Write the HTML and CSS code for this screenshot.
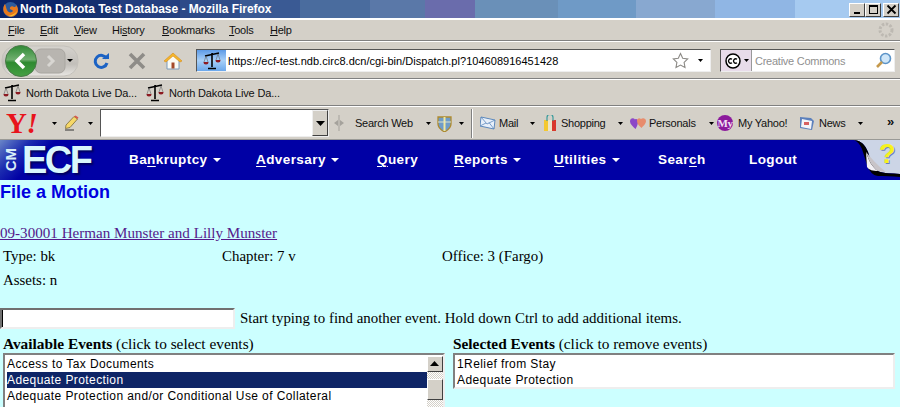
FILE: index.html
```html
<!DOCTYPE html>
<html lang="en">
<head>
<meta charset="utf-8">
<title>North Dakota Test Database - Mozilla Firefox</title>
<link rel="stylesheet" href="styles.css">
</head>
<body>
<svg class="defs" width="0" height="0" aria-hidden="true">
  <symbol id="scales" viewBox="0 0 18 18">
    <path d="M9 1v14M5 16.500h8M2 4l7-1.500L16 1" fill="none" stroke="#000" stroke-width="1.600"/>
    <path d="M3 4 1 10M3 4l2 6M15 2l-2 6M15 2l2 6" fill="none" stroke="#666" stroke-width=".6"/>
    <path d="M.5 10h5a2.500 2.500 0 0 1-5 0zM12.500 8h5a2.500 2.500 0 0 1-5 0z" fill="#8c1a22"/>
  </symbol>
  <symbol id="drop" viewBox="0 0 5 3"><path d="M0 0h5L2.500 3z" fill="#000"/></symbol>
</svg>

<header class="titlebar">
  <svg class="fox" width="17" height="17" viewBox="0 0 17 17"><circle cx="8.500" cy="8.500" r="7.500" fill="#2c5a9c"/><path d="M3 3c-3 4-2 10 3 12 5 2 10-1 10-6 0-2-1-4-2-5 0 2-1 2-2 2C10 4 7 6 8 8c1 1 3 1 3 2-1 2-5 2-6-1C4 7 4 5 3 3z" fill="#e8781c"/><path d="M6 15c4 1 8-1 9-5-2 3-5 4-9 5z" fill="#f6c23c"/></svg>
  <span class="title-text">North Dakota Test Database - Mozilla Firefox</span>
  <div class="winbtns">
    <span class="winbtn"><svg width="15" height="13"><path d="M4 9h6v2H4z"/></svg></span>
    <span class="winbtn"><svg width="15" height="13"><path d="M3 2h9v9H3zM4 4v6h7V4z" fill-rule="evenodd"/></svg></span>
    <span class="winbtn close"><svg width="15" height="13"><path d="m3.500 2.500 8 8m0-8-8 8" stroke="#000" stroke-width="1.800"/></svg></span>
  </div>
</header>

<nav class="menubar">
  <span class="m m-file"><u>F</u>ile</span>
  <span class="m m-edit"><u>E</u>dit</span>
  <span class="m m-view"><u>V</u>iew</span>
  <span class="m m-hist">Hi<u>s</u>tory</span>
  <span class="m m-book"><u>B</u>ookmarks</span>
  <span class="m m-tools"><u>T</u>ools</span>
  <span class="m m-help"><u>H</u>elp</span>
  <svg class="throbber" width="16" height="16" viewBox="0 0 16 16"><circle cx="8" cy="8" r="6" fill="none" stroke="#bdb9b2" stroke-width="3" stroke-dasharray="2.400 1.500"/></svg>
</nav>

<div class="navbar">
  <div class="backfwd">
    <svg width="78" height="34" viewBox="0 0 78 34">
      <defs><linearGradient id="pill" x1="0" y1="0" x2="0" y2="1"><stop offset="0" stop-color="#d6d3ce"/><stop offset=".6" stop-color="#c2bfba"/><stop offset="1" stop-color="#e8e6e2"/></linearGradient>
      <linearGradient id="green" x1="0" y1="0" x2="0" y2="1"><stop offset="0" stop-color="#2e8a34"/><stop offset=".45" stop-color="#6fae6e"/><stop offset=".55" stop-color="#2e8a30"/><stop offset="1" stop-color="#46a044"/></linearGradient></defs>
      <rect x="1" y="2" width="76" height="30" rx="14" fill="url(#pill)" stroke="#c4c1bb"/>
      <rect x="34" y="5" width="30" height="24" rx="6" fill="#b8b5b0" stroke="#a9a6a1"/>
      <circle cx="20" cy="17" r="15.500" fill="url(#green)" stroke="#4a7a48"/>
      <path d="m23 10-7 7 7 7" fill="none" stroke="#fff" stroke-width="3.500"/>
      <path d="m47 12 5 5-5 5" fill="none" stroke="#d8d6d2" stroke-width="3"/>
      <path d="M66 15h6l-3 3z"/>
    </svg>
  </div>
  <svg class="reload" width="18" height="18" viewBox="0 0 18 18"><path d="M14.500 6.500A6 6 0 1 0 15 11" fill="none" stroke="#1b62c4" stroke-width="3"/><path d="M10 7h7V1z" fill="#1b62c4"/></svg>
  <svg class="stop" width="18" height="18" viewBox="0 0 18 18"><path d="m2 2 14 14M16 2 2 16" stroke="#8e8c88" stroke-width="3.600"/></svg>
  <svg class="home" width="20" height="18" viewBox="0 0 20 18"><path d="M4 8v9h12V8L10 3z" fill="#fbfbf4" stroke="#7c9cbc"/><path d="M1 9l9-8 9 8-2 1-7-6-7 6z" fill="#f4b62c" stroke="#d68a18" stroke-width=".6"/><path d="M8.500 10.500h3v6h-3z" fill="#a44a2a"/></svg>
  <div class="urlbar">
    <span class="site"><svg width="18" height="18"><use href="#scales"/></svg></span>
    <span class="url">https://ecf-test.ndb.circ8.dcn/cgi-bin/Dispatch.pl?104608916451428</span>
    <svg class="star" width="17" height="17" viewBox="0 0 17 17"><path d="m8.500 1.500 2.200 4.700 5 .7-3.600 3.500.9 5-4.500-2.400-4.500 2.400.9-5L1.300 6.900l5-.7z" fill="#fff" stroke="#8c8a86" stroke-width="1.100"/></svg>
    <svg class="urldrop" width="5" height="3"><use href="#drop"/></svg>
  </div>
  <div class="searchbar">
    <span class="engine"><svg width="16" height="16" viewBox="0 0 16 16"><circle cx="8" cy="8" r="7" fill="#fff" stroke="#000" stroke-width="1.500"/><path d="M7 6.200a2.200 2.200 0 1 0 0 3.600M12 6.200a2.200 2.200 0 1 0 0 3.600" fill="none" stroke="#000" stroke-width="1.300"/></svg><svg width="5" height="3"><use href="#drop"/></svg></span>
    <span class="placeholder">Creative Commons</span>
    <svg class="glass" width="17" height="17" viewBox="0 0 17 17"><circle cx="10.500" cy="6.500" r="5" fill="#cfe6f8" stroke="#5c94c8" stroke-width="1.600"/><path d="m7 10-5 5" stroke="#c69a4c" stroke-width="2.600"/></svg>
  </div>
</div>

<div class="bookmarks">
  <span class="bm"><svg width="18" height="18"><use href="#scales"/></svg>North Dakota Live Da...</span>
  <span class="bm"><svg width="18" height="18"><use href="#scales"/></svg>North Dakota Live Da...</span>
</div>

<div class="yahoobar">
  <span class="yahoo-logo">Y<i>!</i></span>
  <svg class="d d1" width="5" height="3"><use href="#drop"/></svg>
  <svg class="pencil" width="15" height="16" viewBox="0 0 15 16"><path d="M2 10 10 1.500 13.500 4 6 12.500 1.500 13.500z" fill="#f6d868" stroke="#7a6a3a" stroke-width=".8"/><path d="m10 1.500 3.500 2.500 1-1.500L11.500.5z" fill="#d8584c"/><path d="M1 15h9" stroke="#333"/></svg>
  <svg class="d d2" width="5" height="3"><use href="#drop"/></svg>
  <div class="ysearch"><span class="yarrow"><svg width="9" height="5"><path d="M0 0h9L4.500 5z"/></svg></span></div>
  <svg class="grip" width="10" height="16" viewBox="0 0 10 16"><path d="M5 0v16" stroke="#a5a29c"/><path d="M4 5 0 8l4 3zM6 5l4 3-4 3z" fill="#a5a29c"/></svg>
  <span class="yt y-search">Search Web</span>
  <svg class="d d3" width="5" height="3"><use href="#drop"/></svg>
  <svg class="shield" width="15" height="17" viewBox="0 0 15 17"><path d="M1 2h13v7c0 4-3 6-6.500 8C4 15 1 13 1 9z" fill="#6f9cc8" stroke="#b08a2c" stroke-width="1.300"/><path d="M7.500 2v14" stroke="#f0e8a0" stroke-width="2"/><path d="M1 7h13" stroke="#e0e4c8"/></svg>
  <svg class="d d4" width="5" height="3"><use href="#drop"/></svg>
  <span class="ysep"></span>
  <svg class="mail" width="16" height="14" viewBox="0 0 16 14"><path d="M1 1 15 4 14 13 0 10z" fill="#e8f0fa" stroke="#5c88bc"/><path d="M1 1 7 8l8-4M0 10l6-3M14 13 9 6.500" fill="none" stroke="#5c88bc" stroke-width=".8"/></svg>
  <span class="yt y-mail">Mail</span>
  <svg class="d d5" width="5" height="3"><use href="#drop"/></svg>
  <svg class="shop" width="14" height="17" viewBox="0 0 14 17"><path d="M1 5h8v11H1z" fill="#f4c830"/><path d="M5 5h4v11H5z" fill="#ece4c8"/><path d="M9 5h4v11H9z" fill="#d8382c"/><path d="M4 6V2.500a2.500 2.500 0 0 1 6 0V6" fill="none" stroke="#3c9c9c" stroke-width="1.200"/></svg>
  <span class="yt y-shop">Shopping</span>
  <svg class="d d6" width="5" height="3"><use href="#drop"/></svg>
  <svg class="hearts" width="16" height="13" viewBox="0 0 16 13"><path d="M5 2.500C3.500.5 0 1 0 4.500 0 7 3 9.500 5.500 12 6.500 10 8 8 8 4.500 8 2 6 1.500 5 2.500z" fill="#8c48c8"/><path d="M11 2C9.500.5 7 1 7 4c0 3 2.500 5 4.500 7C13 9 16 7 16 4c0-3-3.500-3.500-5-2z" fill="#e88c6c"/></svg>
  <span class="yt y-pers">Personals</span>
  <svg class="d d7" width="5" height="3"><use href="#drop"/></svg>
  <span class="myicon">My</span>
  <span class="yt y-my">My Yahoo!</span>
  <svg class="news" width="16" height="15" viewBox="0 0 16 15"><path d="M1 1l11 1 3 3-2 9-12-2z" fill="#5c80bc"/><path d="M3 3l10 2-1 8-10-2z" fill="#f4f4f8"/><path d="M5 6h5v3H5z" fill="#d86060"/></svg>
  <span class="yt y-news">News</span>
  <svg class="d d8" width="5" height="3"><use href="#drop"/></svg>
  <span class="chev">»</span>
</div>

<div class="ecfbar">
  <div class="logo"><span class="cm">CM</span><span class="ecf">ECF</span></div>
  <a class="navitem w-bank">Ba<u>n</u>kruptcy <i class="caret"></i></a>
  <a class="navitem w-adv"><u>A</u>dversary <i class="caret"></i></a>
  <a class="navitem w-query"><u>Q</u>uery</a>
  <a class="navitem w-rep"><u>R</u>eports <i class="caret"></i></a>
  <a class="navitem w-util"><u>U</u>tilities <i class="caret"></i></a>
  <a class="navitem w-search">Sear<u>c</u>h</a>
  <a class="navitem w-logout">Logout</a>
  <svg class="help" width="52" height="41" viewBox="0 0 52 41"><path d="M0 0h6c8 1 11 5 14 12 3 10 5 15 10 19 6 3 14 2 22 3V0z" fill="#ccd5e6"/><path d="M6 0c8 1 11 5 14 12 3 10 5 15 10 19 6 3 14 2 22 3v3c-8-1-16-1-22-1-6-1-7-4-10-8L14 9C12 4 9 1 6 0z" fill="#000"/><path d="M18 12c3 9 6 15 12 19-5 0-9-1-11-4z" fill="#f2f0f4"/><path d="M18 12c5 6 12 14 20 20l-8-1c-6-4-9-10-12-19z" fill="#c8c4c8"/><text x="32" y="24" class="qshadow">?</text><text x="31" y="23" class="qmark">?</text></svg>
</div>

<main class="content">
  <h1>File a Motion</h1>
  <p class="case"><a href="#">09-30001 Herman Munster and Lilly Munster</a></p>
  <div class="facts">
    <span>Type: bk</span><span>Chapter: 7 v</span><span>Office: 3 (Fargo)</span>
  </div>
  <p class="assets">Assets: n</p>
  <div class="find">
    <input class="findinput" type="text" aria-label="Find event">
    <span>Start typing to find another event. Hold down Ctrl to add additional items.</span>
  </div>
  <div class="pickers">
    <section class="avail">
      <div class="plabel"><b>Available Events</b> (click to select events)</div>
      <div class="listbox avail-list">
        <div class="options">
          <div class="opt">Access to Tax Documents</div>
          <div class="opt sel">Adequate Protection</div>
          <div class="opt">Adequate Protection and/or Conditional Use of Collateral</div>
          <div class="opt">Administrative Expenses</div>
        </div>
        <div class="scroll"><span class="sbtn"><svg width="9" height="5"><path d="M4.500 0 9 5H0z"/></svg></span><span class="sthumb"></span></div>
      </div>
    </section>
    <section class="chosen">
      <div class="plabel"><b>Selected Events</b> (click to remove events)</div>
      <div class="listbox chosen-list">
        <div class="opt">1Relief from Stay</div>
        <div class="opt">Adequate Protection</div>
      </div>
    </section>
  </div>
</main>
</body>
</html>
```
FILE: styles.css
```css
* { box-sizing: border-box; }
html, body { margin: 0; padding: 0; height: 407px; overflow: hidden; }
body { background: #ccffff; font-family: "Liberation Serif", serif; color: #000; width: 900px; }
.defs { position: absolute; }
svg { display: block; flex: none; }

.titlebar {
  height: 18px; display: flex; align-items: center;
  background: linear-gradient(90deg, #0a246a 0 60px, #14306f 60px 120px, #243f80 120px 180px, #2d4a88 180px 240px, #3a5a94 240px 300px, #4a6c9e 300px 370px, #5a78a8 370px 425px, #6a6cac 425px 475px, #6a90b8 475px 558px, #6f9ac6 558px 636px, #88a8d0 636px 715px, #90b6e4 715px 795px, #a6caf0 795px);
  color: #fff; font: bold 12px "Liberation Sans", sans-serif; padding-left: 2px;
}
.fox { margin-right: 1px; }
.title-text { letter-spacing: -.04px; white-space: nowrap; }
.winbtns { margin-left: auto; margin-right: 1px; display: flex; }
.winbtn { width: 16px; height: 14px; background: #d4d0c8; border: 1px solid; border-color: #fff #404040 #404040 #fff; display: flex; align-items: center; justify-content: center; margin-top: 1px; }
.winbtn.close { margin-left: 2px; }

.menubar {
  height: 23px; background: #d4d0c8; border-top: 2px solid #fff; border-bottom: 1px solid #808080;
  display: flex; align-items: center; font: 11px "Liberation Sans", sans-serif; letter-spacing: -.25px; color: #111;
  padding-bottom: 1px;
}
.menubar u { text-decoration-thickness: 1px; text-underline-offset: 1px; }
.m { display: block; white-space: nowrap; }
.m-file { margin-left: 8px; width: 32px; }
.m-edit { width: 34px; }
.m-view { width: 38px; }
.m-hist { width: 50px; }
.m-book { width: 67px; }
.m-tools { width: 41px; }
.throbber { margin-left: auto; margin-right: 6px; }

.navbar {
  height: 38px; background: #d4d0c8; border-top: 1px solid #fff; border-bottom: 1px solid #808080;
  display: flex; align-items: center; padding-left: 1px; padding-top: 1px;
}
.reload { margin-left: 13px; }
.stop { margin-left: 18px; }
.home { margin-left: 17px; }
.urlbar { margin-left: 13px; width: 515px; height: 23px; display: flex; align-items: center; background: #fff; border: 1px solid; border-color: #555 #eee #eee #555; }
.site { width: 29px; height: 21px; background: linear-gradient(#5e9be6, #a8d0f8 50%, #6ca8ec); display: flex; align-items: center; justify-content: center; margin-right: 2px; }
.url { font: 11px "Liberation Sans", sans-serif; letter-spacing: .03px; white-space: nowrap; color: #000; flex: 1; }
.star { margin-right: 9px; }
.urldrop { margin-right: 7px; }
.searchbar { margin-left: 9px; width: 175px; height: 23px; display: flex; align-items: center; background: #fff; border: 1px solid; border-color: #555 #eee #eee #555; }
.engine { width: 31px; height: 21px; background: #e8dcea; border-right: 1px solid #999; display: flex; align-items: center; gap: 3px; padding-left: 4px; }
.placeholder { margin-left: 3px; font: 11px "Liberation Sans", sans-serif; letter-spacing: -.25px; color: #8f8f8f; flex: 1; white-space: nowrap; }
.glass { margin-right: 2px; }

.bookmarks {
  height: 27px; background: #d4d0c8; border-top: 1px solid #fff; border-bottom: 1px solid #808080;
  display: flex; align-items: center; font: 11px "Liberation Sans", sans-serif; letter-spacing: -.15px; color: #111; padding-left: 3px;
}
.bm { display: flex; align-items: center; gap: 5px; width: 143px; white-space: nowrap; }

.yahoobar {
  height: 33px; background: #d4d0c8; border-top: 1px solid #fff;
  display: flex; align-items: center; font: 11px "Liberation Sans", sans-serif; letter-spacing: -.25px; color: #111;
}
.yt { white-space: nowrap; }
.yahoo-logo { margin-left: 6px; width: 33px; font: bold 29px/1 "Liberation Serif", serif; color: #e8141c; letter-spacing: -.5px; }
.d { margin-top: 1px; }
.d1 { margin-left: 13px; }
.pencil { margin-left: 7px; }
.d2 { margin-left: 9px; }
.ysearch { margin-left: 7px; width: 229px; height: 28px; background: #fff; border: 1px solid; border-color: #555 #eee #eee #555; display: flex; justify-content: flex-end; }
.yarrow { width: 16px; background: #d4d0c8; border: 1px solid; border-color: #eee #404040 #404040 #eee; display: flex; align-items: center; justify-content: center; }
.grip { margin-left: 5px; }
.y-search { margin-left: 11px; width: 63px; }
.d3 { margin-left: 8px; }
.shield { margin-left: 6px; }
.d4 { margin-left: 7px; }
.ysep { margin-left: 7px; width: 2px; height: 29px; background: linear-gradient(90deg, #808080 50%, #fff 50%); }
.mail { margin-left: 7px; }
.y-mail { margin-left: 3px; width: 21px; }
.d5 { margin-left: 10px; }
.shop { margin-left: 8px; }
.y-shop { margin-left: 4px; width: 47px; }
.d6 { margin-left: 10px; }
.hearts { margin-left: 7px; }
.y-pers { margin-left: 3px; width: 50px; }
.d7 { margin-left: 10px; }
.myicon { margin-left: 3px; width: 16px; height: 16px; border-radius: 50%; background: #8c1a9c; color: #f0e0f4; font: bold 11px/16px "Liberation Serif", serif; letter-spacing: -.5px; text-align: center; }
.y-my { margin-left: 5px; width: 53px; }
.news { margin-left: 8px; }
.y-news { margin-left: 4px; width: 29px; }
.d8 { margin-left: 10px; }
.chev { margin-left: 24px; font: bold 13px/1 "Liberation Sans", sans-serif; margin-top: -3px; }

.ecfbar {
  height: 41px; background: #0000a5; display: flex; align-items: center; color: #fff;
  border-top: 1px solid #9a9a96; padding-bottom: 2px; font: bold 13.500px "Liberation Sans", sans-serif; letter-spacing: .42px; position: relative;
}
.logo { width: 129px; height: 40px; margin-bottom: -2px; display: flex; align-items: center; padding-left: 3px; background: linear-gradient(135deg, #6a86c8 0, #1c2cb0 22px, #0000a5 40px); }
.cm { writing-mode: vertical-rl; transform: rotate(180deg); font: bold 15px/15px "Liberation Sans", sans-serif; color: #d8eef8; letter-spacing: 0; }
.ecf { margin-left: 4px; font: bold 38px/1 "Liberation Sans", sans-serif; letter-spacing: -2.500px; color: #d8f6fc; text-shadow: 2px 2px 2px #000060; }
.navitem { display: block; white-space: nowrap; color: #fff; }
.navitem u { text-underline-offset: 2px; text-decoration-thickness: 1px; }
.caret { display: inline-block; width: 0; height: 0; border-left: 4px solid transparent; border-right: 4px solid transparent; border-top: 4px solid #fff; margin-left: 1px; vertical-align: 2px; }
.w-bank { width: 127px; }
.w-adv { width: 121px; }
.w-query { width: 77px; }
.w-rep { width: 100px; }
.w-util { width: 104px; }
.w-search { width: 91px; }
.help { position: absolute; right: 0; top: 0; }
.qmark { font: bold 27px "Liberation Sans", sans-serif; fill: #f6f21c; }
.qshadow { font: bold 27px "Liberation Sans", sans-serif; fill: #6a80c0; }

.content { font-size: 14.900px; line-height: 17px; }
h1 { margin: 3px 0 0; font: bold 18px/18px "Liberation Sans", sans-serif; color: #0000e0; }
.case { margin: 24px 0 0; font-size: 15.100px; }
.case a { color: #551a8b; text-decoration: underline; }
.facts { margin-top: 6px; display: grid; grid-template-columns: 219px 220px 220px; padding-left: 3px; }
.assets { margin: 7px 0 0 3px; }
.find { margin-top: 19px; display: flex; align-items: center; gap: 5px; height: 21px; }
.findinput { width: 235px; height: 21px; margin: 0; padding: 0; background: linear-gradient(#000, #000) 0 0 / 1px 100% no-repeat #fff; border: 2px solid; border-color: #707070 #eee #eee #707070; }
.pickers { display: flex; margin-top: 6px; padding-left: 3px; }
.avail { width: 450px; }
.plabel { height: 18px; line-height: 18px; font-size: 15.350px; white-space: nowrap; }
.listbox { background: #fff; border: 2px solid; border-color: #808080 #eee #eee #808080; font: 12px/16px "Liberation Sans", sans-serif; letter-spacing: .41px; }
.avail-list { width: 442px; height: 70px; display: flex; overflow: hidden; }
.options { flex: 1; padding-left: 2px; padding-top: 1px; }
.opt { height: 16px; white-space: nowrap; color: #000; }
.opt.sel { background: #0e2566; color: #fff; }
.scroll { width: 16px; margin-top: 1px; background: repeating-conic-gradient(#d4d0c8 0 25%, #fff 0 50%) 0 0 / 2px 2px; }
.sbtn { display: block; height: 16px; background: #d4d0c8; border: 1px solid; border-color: #fff #404040 #404040 #fff; padding: 4px 2px; }
.sthumb { display: block; height: 21px; margin-top: 7px; background: #d4d0c8; border: 1px solid; border-color: #fff #404040 #404040 #fff; }
.chosen { width: 442px; }
.chosen-list { width: 442px; height: 36px; padding: 1px 0 0 2px; }
```
